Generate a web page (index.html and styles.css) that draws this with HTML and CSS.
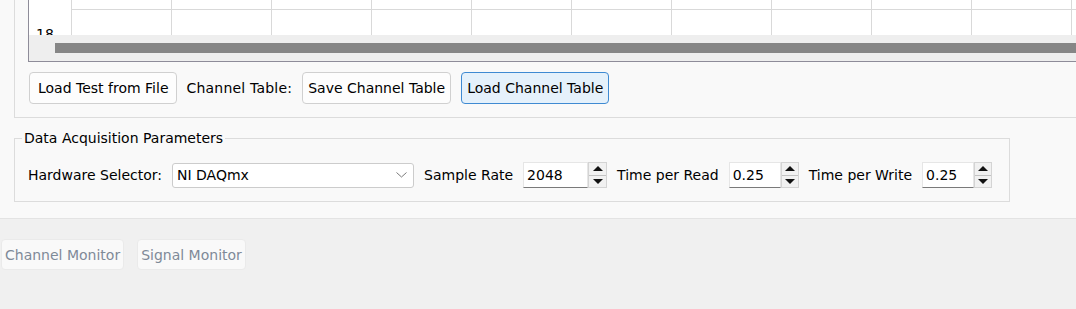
FILE: index.html
```html
<!DOCTYPE html>
<html lang="en">
<head>
  <meta charset="UTF-8" />
  <meta name="viewport" content="width=device-width, initial-scale=1.0"/>
  <title>Test Setup</title>
  <link rel="stylesheet" href="styles.css">
</head>
<body>
  <div class="panel">
    <div class="frame">
      <div class="table">
        <div class="grid">
          <div class="row first">
            <div class="hdr"></div>
            <div class="cell"></div><div class="cell"></div><div class="cell"></div><div class="cell"></div>
            <div class="cell"></div><div class="cell"></div><div class="cell"></div><div class="cell"></div>
            <div class="cell"></div><div class="cell"></div><div class="cell"></div>
          </div>
          <div class="row">
            <div class="hdr">18</div>
            <div class="cell"></div><div class="cell"></div><div class="cell"></div><div class="cell"></div>
            <div class="cell"></div><div class="cell"></div><div class="cell"></div><div class="cell"></div>
            <div class="cell"></div><div class="cell"></div><div class="cell"></div>
          </div>
        </div>
        <div class="hscroll"><div class="thumb"></div></div>
      </div>

      <div class="actions">
        <button class="btn btn-load">Load Test from File</button>
        <span class="label table-label">Channel Table:</span>
        <button class="btn">Save Channel Table</button>
        <button class="btn btn-focus">Load Channel Table</button>
      </div>
    </div>

    <fieldset class="group">
      <legend>Data Acquisition Parameters</legend>
      <div class="params">
        <span class="label">Hardware Selector:</span>
        <div class="combo">
          <span>NI DAQmx</span>
          <svg width="11" height="6" viewBox="0 0 11 6"><path d="M0.5 0.5 L5.5 5 L10.5 0.5" fill="none" stroke="#7a7a7a" stroke-width="1"/></svg>
        </div>

        <span class="label">Sample Rate</span>
        <div class="spin">
          <div class="spin-input wide">2048</div>
          <div class="spin-btns wide"><div class="up"><i></i></div><div class="down"><i></i></div></div>
        </div>

        <span class="label">Time per Read</span>
        <div class="spin">
          <div class="spin-input">0.25</div>
          <div class="spin-btns"><div class="up"><i></i></div><div class="down"><i></i></div></div>
        </div>

        <span class="label">Time per Write</span>
        <div class="spin">
          <div class="spin-input">0.25</div>
          <div class="spin-btns"><div class="up"><i></i></div><div class="down"><i></i></div></div>
        </div>
      </div>
    </fieldset>
  </div>

  <div class="monitors">
    <button class="mon-btn" disabled>Channel Monitor</button>
    <button class="mon-btn" disabled>Signal Monitor</button>
  </div>
</body>
</html>
```

FILE: styles.css
```css
* {
  box-sizing: border-box;
}

html, body {
  margin: 0;
  height: 100%;
}

body {
  font-family: "DejaVu Sans", sans-serif;
  font-size: 14px;
  color: #000;
  background-color: #f0f0f0;
  overflow: hidden;
}

.panel {
  background-color: #f9f9f9;
  border-bottom: 1px solid #e3e3e3;
  padding-bottom: 16px;
  overflow: hidden;
}

/* table frame */
.frame {
  margin-left: 14px;
  border-left: 1px solid #dcdcdc;
  border-bottom: 1px solid #dcdcdc;
  padding: 0 0 13px 13px;
}

.table {
  border-left: 1px solid #8e8c99;
  border-bottom: 1px solid #8e8c99;
}

.grid {
  height: 35px;
  overflow: hidden;
  background-color: #fff;
}

.row {
  display: flex;
  height: 43px;
}

.row.first {
  margin-top: -33px;
}

.hdr {
  flex: 0 0 43px;
  display: flex;
  align-items: center;
  padding-left: 7px;
  padding-top: 5px;
  border-right: 1px solid #d9d9d9;
}

.cell {
  flex: 0 0 100px;
  border-right: 1px solid #d9d9d9;
  border-bottom: 1px solid #d9d9d9;
}

.hscroll {
  height: 26px;
  padding: 8px 0 0 26px;
  background-color: #eeeeee;
}

.thumb {
  height: 10px;
  background-color: #868686;
}

.actions {
  display: flex;
  align-items: center;
  gap: 10px;
  margin: 10px 0 0 1px;
}

.btn {
  height: 32px;
  padding: 0 5px;
  font: inherit;
  color: #000;
  background-color: #fdfdfd;
  border: 1px solid #d0d0d0;
  border-radius: 4px;
}

.btn-load {
  padding: 0 7px 0 8px;
}

.table-label {
  letter-spacing: 0.2px;
}

.btn-focus {
  background-color: #e5f1fb;
  border-color: #3f8ad2;
}

.label {
  white-space: nowrap;
}

/* data acquisition group */
.group {
  margin: 12px 0 0 14px;
  width: 996px;
  padding: 0;
  border: 1px solid #dcdcdc;
  min-width: 0;
}

.group legend {
  margin-left: 7px;
  padding: 0 2px;
  line-height: 16px;
}

.params {
  display: flex;
  align-items: center;
  gap: 10px;
  padding: 16px 0 13px 13px;
}

.combo {
  display: flex;
  align-items: center;
  justify-content: space-between;
  width: 242px;
  height: 25px;
  padding: 0 6px 0 4px;
  background-color: #fff;
  border: 1px solid #cccccc;
  border-radius: 3px;
}

.spin {
  display: flex;
  height: 26px;
}

.spin-input {
  display: flex;
  align-items: center;
  width: 52px;
  padding-left: 3px;
  background-color: #fff;
  border: 1px solid #e6e6e6;
  border-bottom-color: #7a7a7a;
}

.spin-input.wide {
  width: 65px;
}

.spin-btns {
  display: flex;
  flex-direction: column;
  width: 18px;
  background-color: #f1f1f1;
  border: 1px solid #d4d4d4;
}

.spin-btns.wide {
  width: 19px;
}

.spin-btns div {
  flex: 1;
  display: flex;
  align-items: center;
  justify-content: center;
}

.spin-btns .down {
  border-top: 1px solid #c2c2c2;
}

.spin-btns i {
  width: 0;
  height: 0;
  border-left: 5px solid transparent;
  border-right: 5px solid transparent;
}

.spin-btns .up i {
  border-bottom: 5px solid #111;
}

.spin-btns .down i {
  border-top: 5px solid #111;
}

/* monitor buttons */
.monitors {
  display: flex;
  gap: 13px;
  padding: 20px 0 0 1px;
}

.mon-btn {
  height: 31px;
  padding: 0 3px;
  font: inherit;
  color: #7f8a98;
  background-color: #f9f9f9;
  border: 1px solid #eaeaea;
  border-radius: 4px;
}
```
